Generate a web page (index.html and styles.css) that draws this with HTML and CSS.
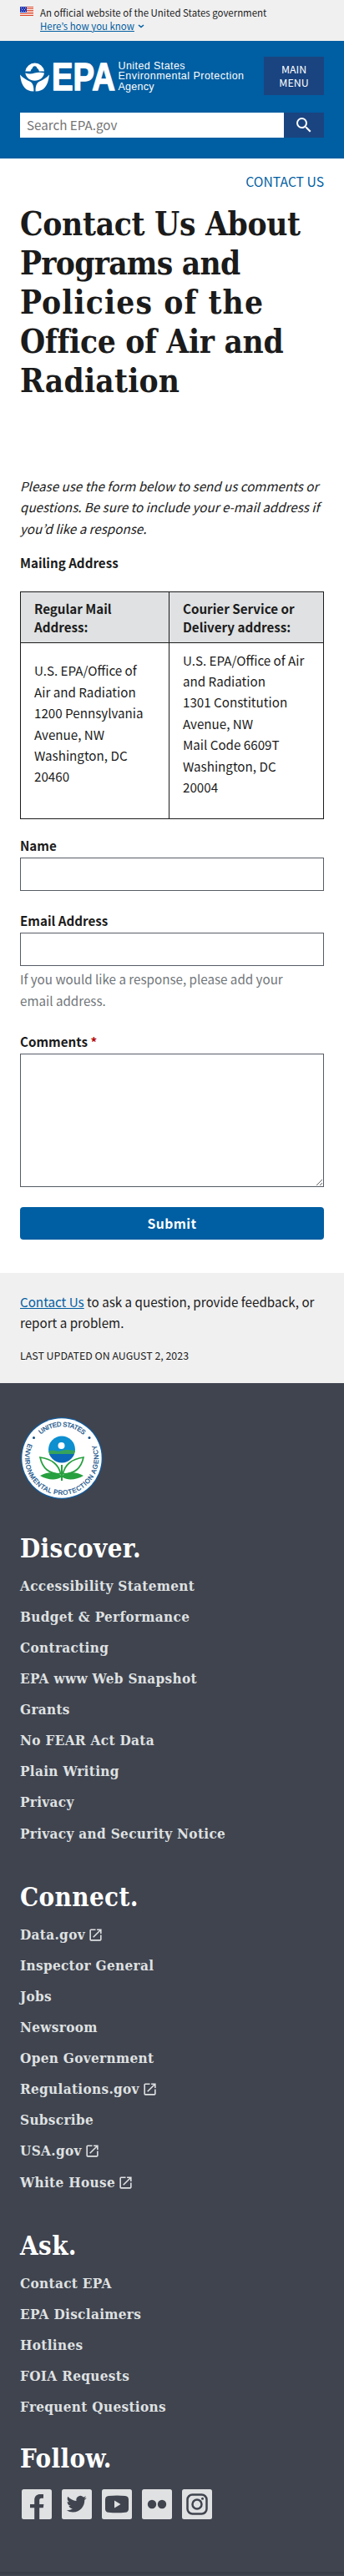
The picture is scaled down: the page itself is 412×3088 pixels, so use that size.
FILE: index.html
```html
<!DOCTYPE html>
<html lang="en">
<head>
<meta charset="utf-8">
<meta name="viewport" content="width=device-width, initial-scale=1">
<title>Contact Us About Programs and Policies of the Office of Air and Radiation</title>
<link rel="stylesheet" href="styles.css">
</head>
<body>
<svg width="0" height="0" class="defs" aria-hidden="true">
  <symbol id="launch" viewBox="0 0 24 24"><path d="M19 19H5V5h7V3H5a2 2 0 0 0-2 2v14a2 2 0 0 0 2 2h14c1.100 0 2-.9 2-2v-7h-2v7zM14 3v2h3.590l-9.830 9.830 1.410 1.410L19 6.410V10h2V3h-7z"/></symbol>
</svg>
<div class="banner">
  <svg class="flag" width="16" height="11" viewBox="0 0 16 11" aria-hidden="true">
    <path fill="#fff" d="M0 0h16v11H0z"/>
    <path fill="#db3e1f" d="M0 0h16v1H0zM0 2h16v1H0zM0 4h16v1H0zM0 6h16v1H0zM0 8h16v1H0zM0 10h16v1H0z"/>
    <path fill="#1e33b1" d="M0 0h8v7H0z"/>
    <g fill="#fff"><circle cx="1.500" cy="1.500" r=".5"/><circle cx="4" cy="1.500" r=".5"/><circle cx="6.500" cy="1.500" r=".5"/><circle cx="2.700" cy="3.500" r=".5"/><circle cx="5.300" cy="3.500" r=".5"/><circle cx="1.500" cy="5.500" r=".5"/><circle cx="4" cy="5.500" r=".5"/><circle cx="6.500" cy="5.500" r=".5"/></g>
  </svg>
  <div class="banner-text">
    <p class="banner-line">An official website of the United States government</p>
    <p class="banner-link"><a href="#">Here’s how you know</a>
      <svg width="8" height="5" viewBox="0 0 8 5" aria-hidden="true"><path d="M1 1l3 2.600L7 1" fill="none" stroke="#005ea2" stroke-width="1.500"/></svg></p>
  </div>
</div>
<header class="header">
  <div class="brand-row">
    <svg class="logo" width="270" height="38" viewBox="0 0 270 38" role="img" aria-label="US EPA">
      <g fill="#fff">
        <path d="M6.300 12.600a11.500 11.500 0 0 1 22.800 0h-6.200a5.300 5.300 0 0 0-10.400 0z"/>
        <circle cx="17.600" cy="8.800" r="2.600" fill="#005ea2"/>
        <path d="M6.300 14.600q5.700 2 11.300 0 5.700-1.600 11.400 0c-.8 5.400-5.500 9.200-11.400 9.200s-10.400-3.800-11.300-9.200z"/>
        <path d="M0 16.500c3.500 4 7.500 6.200 12 8.300 3 1.600 4.600 5.300 4.400 11.600C7 36.500 1.500 31 0 16.500zM35 16.500c-3.500 4-7.500 6.200-12 8.300-3 1.600-4.600 5.300-4.400 11.600C28 36.500 33.500 31 35 16.500z"/>
      </g>
      <text class="logo-epa" x="38" y="35" textLength="76" lengthAdjust="spacingAndGlyphs">EPA</text>
      <g class="logo-name">
        <text x="117.500" y="9.800" textLength="80">United States</text>
        <text x="117.500" y="22.300" textLength="150.500">Environmental Protection</text>
        <text x="117.500" y="35.200" textLength="43">Agency</text>
      </g>
    </svg>
    <button class="menu">MAIN<br>MENU</button>
  </div>
  <form class="search">
    <input type="text" placeholder="Search EPA.gov" aria-label="Search">
    <button type="button" aria-label="Search"><svg width="24" height="24" viewBox="0 0 24 24" fill="#fff"><path d="M15.500 14h-.79l-.28-.27A6.471 6.471 0 0 0 16 9.500 6.500 6.500 0 1 0 9.500 16c1.610 0 3.090-.59 4.230-1.570l.27.28v.79l5 4.990L20.490 19l-4.990-5zm-6 0C7.010 14 5 11.990 5 9.500S7.010 5 9.500 5 14 7.010 14 9.500 11.990 14 9.500 14z"/></svg></button>
  </form>
</header>
<main class="main">
  <a class="contact" href="#">CONTACT US</a>
  <h1>Contact Us About<br><span class="snug">Programs and</span><br><span class="loose">Policies of the</span><br>Office of Air and<br><span class="open">Radiation</span></h1>
  <p class="intro">Please use the form below to send us comments or<br>questions. Be sure to include your e-mail address if<br>you’d like a response.</p>
  <p class="mailing">Mailing Address</p>
  <table class="addresses">
    <thead><tr><th>Regular Mail<br>Address:</th><th>Courier Service or<br>Delivery address:</th></tr></thead>
    <tbody><tr>
      <td><p>U.S. EPA/Office of<br>Air and Radiation<br>1200 Pennsylvania<br>Avenue, NW<br>Washington, DC<br>20460</p></td>
      <td><p>U.S. EPA/Office of Air<br>and Radiation<br>1301 Constitution<br>Avenue, NW<br>Mail Code 6609T<br>Washington, DC<br>20004</p></td>
    </tr></tbody>
  </table>
  <form class="form">
    <label for="name">Name</label>
    <input id="name" type="text">
    <label for="email">Email Address</label>
    <input id="email" type="text">
    <p class="hint">If you would like a response, please add your<br>email address.</p>
    <label for="comments">Comments <span class="required">*</span></label>
    <textarea id="comments"></textarea>
    <button type="button" class="submit">Submit</button>
  </form>
</main>
<section class="feedback">
  <p><a href="#">Contact Us</a> to ask a question, provide feedback, or<br>report a problem.</p>
  <p class="updated">LAST UPDATED ON AUGUST 2, 2023</p>
</section>
<footer class="footer">
  <svg class="seal" width="100" height="100" viewBox="-50 -50 100 100" role="img" aria-label="EPA seal">
    <defs>
      <path id="arc-top" d="M-38 0A38 38 0 0 1 38 0"/>
      <path id="arc-bottom" d="M-39.900-18.600A44 44 0 1 0 39.900-18.600"/>
      <clipPath id="globe"><circle cy="-10.500" r="16"/></clipPath>
    </defs>
    <circle r="49" fill="#135a9a"/><circle r="47.700" fill="#fff"/>
    <g class="seal-text">
      <text textLength="56"><textPath href="#arc-top" startOffset="32" textLength="56">UNITED STATES</textPath></text>
      <text textLength="172"><textPath href="#arc-bottom" startOffset="1" textLength="172">ENVIRONMENTAL PROTECTION AGENCY</textPath></text>
    </g>
    <circle cx="-33.500" cy="-24.500" r="1.500" fill="#124f87"/><circle cx="33" cy="-24.500" r="1.500" fill="#124f87"/>
    <g clip-path="url(#globe)">
      <path fill="#0d8fd0" d="M-16-27h32v20h-32z"/>
      <path fill="#35a35c" d="M-16-8q4-2.500 8-1t8 0 8-1 8 1v4h-32z"/>
      <path fill="#0b68b8" d="M-16-5h32V8h-32z"/>
    </g>
    <circle cx="-.5" cy="-15" r="4" fill="#fff"/>
    <path fill="#fff" stroke="#27a03f" stroke-width="1.700" d="M-1.500 19C-3 9-11 1-26-1c3 14 11 20 24.500 20zM1.500 19C3 9 11 1 26-1c-3 14-11 20-24.500 20z"/>
    <path fill="#27a03f" d="M-26 21c8-5 18-5 25-.5V8H1v12.500c7-4.500 17-4.500 25 .5-8 5-19 6-25 2v4h-2v-4c-6 4-17 3-25-2z"/>
  </svg>
  <section class="links discover">
    <h2>Discover.</h2>
    <ul>
      <li><a href="#">Accessibility Statement</a></li>
      <li><a href="#">Budget &amp; Performance</a></li>
      <li><a href="#">Contracting</a></li>
      <li><a href="#">EPA www Web Snapshot</a></li>
      <li><a href="#">Grants</a></li>
      <li><a href="#">No FEAR Act Data</a></li>
      <li><a href="#">Plain Writing</a></li>
      <li><a href="#">Privacy</a></li>
      <li><a href="#">Privacy and Security Notice</a></li>
    </ul>
  </section>
  <section class="links connect">
    <h2>Connect.</h2>
    <ul>
      <li><a href="#">Data.gov</a><svg class="ext"><use href="#launch"/></svg></li>
      <li><a href="#">Inspector General</a></li>
      <li><a href="#">Jobs</a></li>
      <li><a href="#">Newsroom</a></li>
      <li><a href="#">Open Government</a></li>
      <li><a href="#">Regulations.gov</a><svg class="ext"><use href="#launch"/></svg></li>
      <li><a href="#">Subscribe</a></li>
      <li><a href="#">USA.gov</a><svg class="ext"><use href="#launch"/></svg></li>
      <li><a href="#">White House</a><svg class="ext"><use href="#launch"/></svg></li>
    </ul>
  </section>
  <section class="links ask">
    <h2>Ask.</h2>
    <ul>
      <li><a href="#">Contact EPA</a></li>
      <li><a href="#">EPA Disclaimers</a></li>
      <li><a href="#">Hotlines</a></li>
      <li><a href="#">FOIA Requests</a></li>
      <li><a href="#">Frequent Questions</a></li>
    </ul>
  </section>
  <section class="follow">
    <h2>Follow.</h2>
    <div class="social">
      <svg viewBox="0 0 36 36" aria-label="Facebook"><rect class="tile" width="36" height="36" rx="2.500"/><path class="mark" d="M15.200 36V22.300H10v-4.300h5.200V13c0-4.800 2.800-7 7-7H26v4.800h-2.300c-2 0-2.500 1-2.500 2.500v4.700h5.200l-.6 4.300h-4.600V36z"/></svg>
      <svg viewBox="0 0 36 36" aria-label="Twitter"><rect class="tile" width="36" height="36" rx="2.500"/><path class="mark" transform="translate(5.700 5.700)" d="M23.953 4.570a10 10 0 0 1-2.825.775 4.958 4.958 0 0 0 2.163-2.723c-.951.555-2.005.959-3.127 1.184a4.920 4.920 0 0 0-8.384 4.482C7.690 8.095 4.067 6.130 1.640 3.162a4.822 4.822 0 0 0-.666 2.475c0 1.710.87 3.213 2.188 4.096a4.904 4.904 0 0 1-2.228-.616v.06a4.923 4.923 0 0 0 3.946 4.827 4.996 4.996 0 0 1-2.212.085 4.936 4.936 0 0 0 4.604 3.417 9.867 9.867 0 0 1-6.102 2.105c-.39 0-.779-.023-1.170-.067a13.995 13.995 0 0 0 7.557 2.209c9.053 0 13.998-7.496 13.998-13.985 0-.21 0-.42-.015-.63A9.935 9.935 0 0 0 24 4.590z"/></svg>
      <svg viewBox="0 0 36 36" aria-label="YouTube"><rect class="tile" width="36" height="36" rx="2.500"/><path class="mark" d="M8 8q10-1 20 0 4 .3 4 4.500v11q0 4-4 4.300-10 1-20 0-4-.3-4-4.300v-11Q4 8.300 8 8zm7 5.500v9l7.500-4.500z"/></svg>
      <svg viewBox="0 0 36 36" aria-label="Flickr"><rect class="tile" width="36" height="36" rx="2.500"/><circle class="mark" cx="12" cy="18" r="5.200"/><circle class="mark" cx="24" cy="18" r="5.200"/></svg>
      <svg viewBox="0 0 36 36" aria-label="Instagram"><rect class="tile" width="36" height="36" rx="2.500"/><g class="ring"><rect x="6.500" y="6.500" width="23" height="23" rx="6"/><circle cx="18" cy="18" r="5.500"/></g><circle class="mark" cx="24.500" cy="11.300" r="1.500"/></svg>
    </div>
  </section>
  <div class="rule"></div>
</footer>
</body>
</html>
```

FILE: styles.css
```css
* { box-sizing: border-box; }
body {
  margin: 0;
  background: #fff;
  color: #1b1b1b;
  font: 15.18px/25.44px "Noto Sans CJK KR", "Open Sans", sans-serif;
  white-space: nowrap;
}
p, h1, h2, ul { margin: 0; padding: 0; }
a { color: #005ea2; }
.defs { display: none; }
button, input, textarea { font: inherit; margin: 0; border-radius: 0; display: block; }

.banner {
  display: flex;
  gap: 8px;
  height: 49px;
  padding: 8px 24px 0;
  background: #f0f0f0;
  font-size: 11.45px;
  line-height: 16px;
}
.banner-text { margin-top: -1px; }
.banner-link { display: flex; align-items: center; gap: 4px; }

.header { height: 141px; padding: 19px 24px 0; background: #005ea2; }
.brand-row { display: flex; justify-content: space-between; height: 67px; }
.logo { margin-top: 5px; overflow: visible; }
.logo-epa { font: bold 47px "Liberation Sans", sans-serif; fill: #fff; stroke: #fff; stroke-width: 1.4; }
.logo-name { font: 12.5px "Liberation Sans", sans-serif; fill: #fff; }
.menu {
  width: 72px;
  height: 46px;
  padding: 0;
  border: 0;
  background: #1a4480;
  color: #fff;
  font-size: 12.4px;
  line-height: 16px;
}
.search { display: flex; height: 30px; }
.search input { flex: 1; min-width: 0; padding: 0 8px; border: 0; background: #fff; }
.search input::placeholder { color: #757575; }
.search button {
  width: 48px;
  padding: 0;
  border: 0;
  background: #1a4480;
  display: flex;
  align-items: center;
  justify-content: center;
}

.main { padding: 15px 24px 40px; display: flex; flex-direction: column; }
.contact { align-self: flex-end; text-decoration: none; font-size: 15.7px; }
h1, h2 { font-family: "DejaVu Serif Condensed", "DejaVu Serif", serif; font-weight: bold; }
h1 { margin-top: 15px; height: 324.6px; font-size: 38.5px; line-height: 47px; letter-spacing: -.3px; }
.snug { letter-spacing: -.75px; }
.loose { letter-spacing: 1.1px; }
.open { letter-spacing: .2px; }
.intro { font-style: italic; }
.mailing { margin: 15.4px 0 21.9px; font-weight: bold; }

.addresses { border-collapse: collapse; width: 364px; table-layout: fixed; }
.addresses th, .addresses td { border: 1px solid #1b1b1b; padding: 8px 16px; text-align: left; vertical-align: middle; }
.addresses th { background: #dfe1e2; line-height: 22px; }
.addresses th:first-child { width: 178px; }
.addresses td { padding-top: 7.5px; }
.addresses td p { margin-bottom: 16.5px; }

.form label { display: block; margin-top: 19px; height: 27px; line-height: 24px; font-weight: bold; }
.form input, .form textarea { width: 364px; height: 40px; border: 1px solid #565c65; background: #fff; }
.form input + label { margin-top: 23px; }
.hint { margin-top: 3px; color: #71767a; }
.form .hint + label { margin-top: 24px; }
.form textarea { height: 160px; resize: vertical; }
.required { color: #b50909; }
.submit {
  width: 364px;
  height: 39px;
  margin-top: 24px;
  border: 0;
  border-radius: 4px;
  background: #005ea2;
  color: #fff;
  font-size: 15.7px;
  font-weight: bold;
  letter-spacing: .4px;
}

.feedback { height: 132px; padding: 22px 24px 0; background: #f0f0f0; }
.updated { margin-top: 14px; font-size: 12.4px; line-height: 24px; }

.footer { height: 1430px; padding: 40px 24px 0; background: #40444f; }
.seal { display: block; }
.seal-text { font: 7.8px "Liberation Sans", sans-serif; fill: #124f87; stroke: #124f87; stroke-width: .25; }
.footer h2 { color: #fff; font-size: 31px; line-height: 38px; letter-spacing: .4px; }
.footer ul { list-style: none; margin-top: 7.5px; }
.footer li {
  display: flex;
  align-items: center;
  height: 37.13px;
  font: bold 17px/37px "DejaVu Serif Condensed", "DejaVu Serif", serif;
  letter-spacing: .33px;
}
.footer a { color: #dfe1e2; text-decoration: none; }
.ext { width: 19px; height: 19px; margin-left: 3px; fill: #dfe1e2; }
.discover { margin-top: 39px; }
.connect, .ask { margin-top: 38.4px; }
.follow { margin-top: 23.5px; }
.social { display: flex; gap: 12px; padding-left: 2px; margin-top: 18.4px; }
.social svg { width: 36px; height: 36px; }
.tile { fill: #dfe1e2; }
.mark { fill: #40444f; }
.ring { fill: none; stroke: #40444f; stroke-width: 2.5; }
.rule { height: 3px; margin: 63px -24px 0; border: solid #353842; border-width: 1px 0; }
```
